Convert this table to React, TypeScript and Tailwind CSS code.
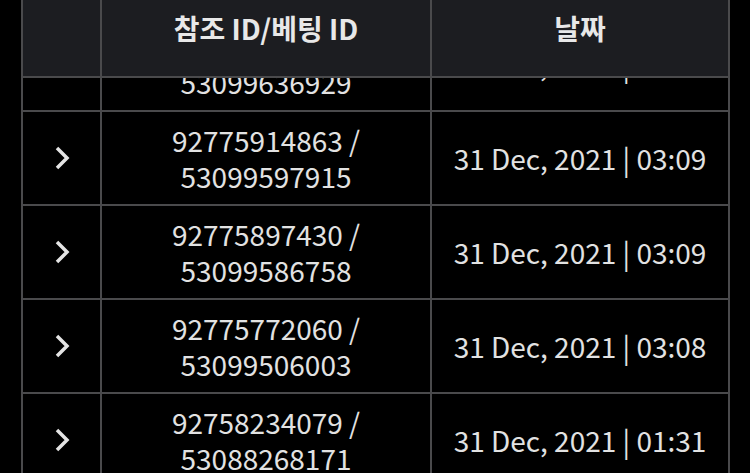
const rows = [
  { ref: "92775952114", bet: "53099636929", date: "31 Dec, 2021 | 03:10" },
  { ref: "92775914863", bet: "53099597915", date: "31 Dec, 2021 | 03:09" },
  { ref: "92775897430", bet: "53099586758", date: "31 Dec, 2021 | 03:09" },
  { ref: "92775772060", bet: "53099506003", date: "31 Dec, 2021 | 03:08" },
  { ref: "92758234079", bet: "53088268171", date: "31 Dec, 2021 | 01:31" },
];

function Chevron() {
  return (
    <svg width="16" height="26" viewBox="0 0 16 26" fill="none">
      <polyline points="3,3 13,13 3,23" stroke="#e4e4e4" strokeWidth="3.5" strokeLinecap="butt" strokeLinejoin="miter" />
    </svg>
  );
}

export default function App() {
  return (
    <div
      className="h-[473px] w-[750px] overflow-hidden bg-black text-[#e2e2e2]"
      style={{ fontFamily: '"Noto Sans CJK KR", "Noto Sans", sans-serif' }}
    >
      <div className="ml-[21px] w-[709px]">
        {/* sticky header */}
        <div className="flex h-[78px] border-b-2 border-[#4a4a4c] bg-[#1c1d21] text-[28px] font-bold leading-9 text-[#e8e8e8]">
          <div className="w-[79px] border-l-2 border-[#4a4a4c]" />
          <div className="flex w-[330px] justify-center border-l-2 border-[#4a4a4c] pt-[10px]">참조 ID/베팅 ID</div>
          <div className="flex w-[300px] justify-center border-x-2 border-[#4a4a4c] pt-[10px]">날짜</div>
        </div>

        <div className="h-[395px] overflow-hidden">
          <div className="-mt-[60px]">
            {rows.map((r) => (
              <div key={r.ref} className="flex h-[94px] border-b-2 border-[#4a4a4c] text-[28px] leading-9">
                <div className="flex w-[79px] items-center justify-center border-l-2 border-[#4a4a4c]">
                  <Chevron />
                </div>
                <div className="flex w-[330px] flex-col items-center justify-center border-l-2 border-[#4a4a4c]">
                  <span>{r.ref} /</span>
                  <span>{r.bet}</span>
                </div>
                <div className="flex w-[300px] items-center justify-center border-x-2 border-[#4a4a4c]">
                  {r.date}
                </div>
              </div>
            ))}
          </div>
        </div>
      </div>
    </div>
  );
}
